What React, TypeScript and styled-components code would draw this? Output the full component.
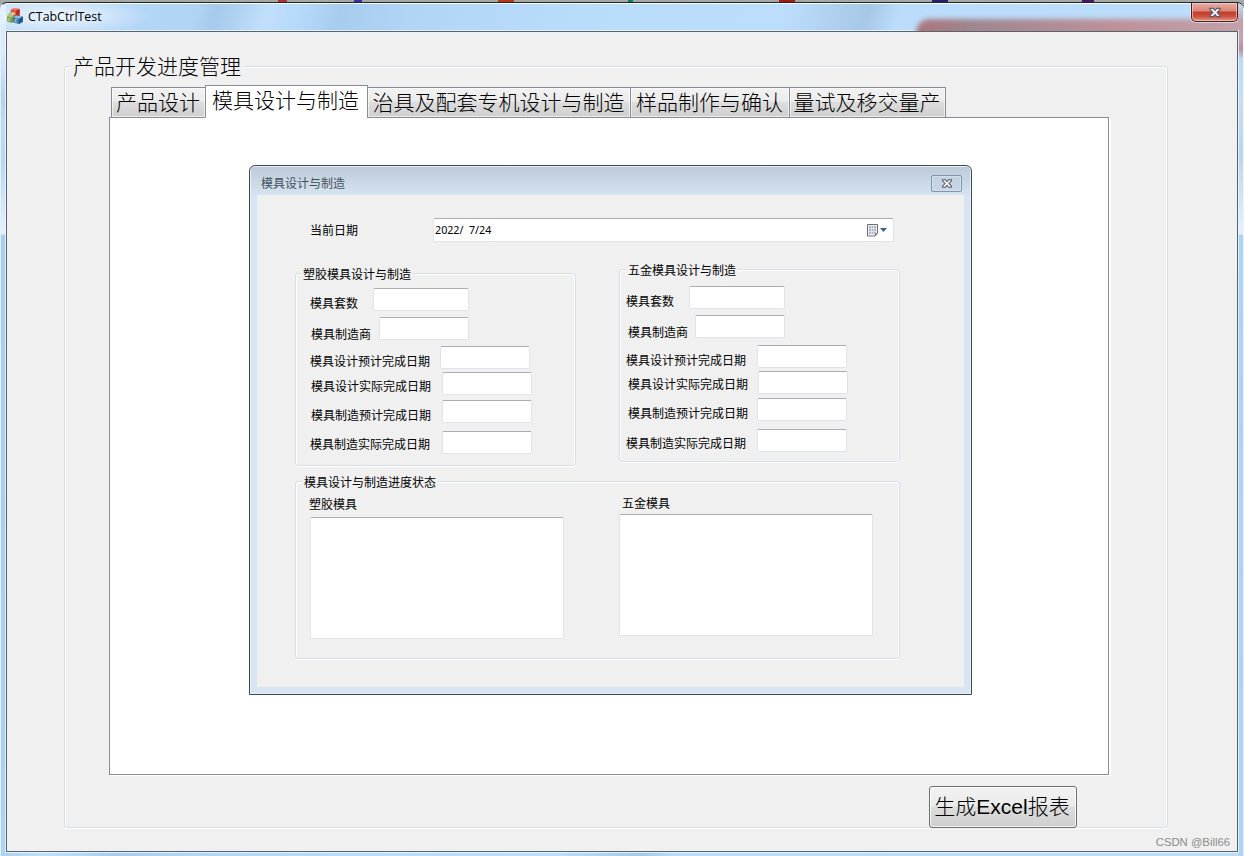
import React from "react";
import styled, { createGlobalStyle, css } from "styled-components";

const GlobalStyle = createGlobalStyle`
  * { box-sizing: border-box; }
  html, body { margin: 0; padding: 0; overflow: hidden; }
  body { font: 12px/14px "Noto Sans CJK SC", sans-serif; color: #000; }
`;

const Desktop = styled.div`
  width: 1244px;
  height: 856px;
  padding-top: 2px;
  background: linear-gradient(90deg, transparent 278px, #a33 278px 287px, transparent 287px 354px, #339 354px 362px, transparent 362px 498px, #b53817 498px 514px, transparent 514px 628px, #087a68 628px 633px, transparent 633px 779px, #a11d14 779px 795px, transparent 795px 932px, #24246a 932px 948px, transparent 948px 1082px, #4b1763 1082px 1094px, transparent 1094px), #a5a8a5;
`;

const Window = styled.div`
  display: flex;
  flex-direction: column;
  height: 854px;
  padding: 0 6px 4px 0;
  border-top: 1px solid #1c2630;
  border-left: 1px solid #e4f1fc;
  border-radius: 7px 7px 0 0;
  background:
    linear-gradient(#fff, #fff) 0 0 / 100% 1px no-repeat,
    linear-gradient(#eef7ff, #dcecfa) 100% 0 / 1px 100% no-repeat,
    radial-gradient(ellipse 90px 20px at 60px 13px, rgba(255, 255, 255, 0.75), transparent) no-repeat,
    linear-gradient(#dcedfc 0, #d8eafb 50px, #b4d2ee 98px, #c0dbf5 120px, #b9d7f2 160px, #e4f1fc 231px, #aacdf0 232px, #aed2f4 100%) 0 0 / 5px 100% no-repeat,
    linear-gradient(#c6def4 0, #c3a0a6 18px, #c4a6b0 34px, #bb9098 46px, #bcdaf6 56px, #c6dff7 100px, #b9d5f0 150px, #e8f2fd 231px, #aed2f6 232px, #b0d4f7 100%) 100% 0 / 6px 100% no-repeat,
    linear-gradient(105deg, #c3def6 0, #b5d7f8 100px, #b2d4f4 190px, #a6caec 210px, #c0dffa 260px, #b7dafb 290px, #a8ccee 330px, #b2d5f6 400px, #badcfb 560px, #bcdefc 760px, #a6c8e6 840px, #bbddfb 870px, #bddcf8 100%) no-repeat;
`;

const TitleBar = styled.div`
  display: flex;
  align-items: flex-start;
  height: 28px;
  flex: none;
  position: relative;
  padding: 5px 0 0 6px;
  overflow: hidden;
`;

const TitleGlow = styled.div`
  position: absolute;
  left: 915px;
  top: 16px;
  width: 340px;
  height: 34px;
  border-radius: 14px 0 0 0;
  background: linear-gradient(90deg, #ab767b, #a0868f 60px, #bd9299 200px, #c4a2aa);
  filter: blur(2.5px);
`;

const TitleText = styled.span`
  margin: 1px 0 0 5px;
  font: 12.4px/16px "Open Sans", sans-serif;
  flex: 1;
`;

const CloseButton = styled.button<{ $inner?: boolean }>`
  display: flex;
  align-items: center;
  justify-content: center;
  padding: 0;
  flex: none;
  position: relative;
  ${(p) =>
    p.$inner
      ? css`
          width: 31px;
          height: 17px;
          margin: 9px 2px 0 0;
          border: 1px solid #8494b0;
          border-radius: 2px;
          background: linear-gradient(#c3d0de, #c9d7e6);
          box-shadow: inset 0 0 0 1px #d3dfeb;
        `
      : css`
          width: 47px;
          height: 19px;
          margin: -5px 0 0;
          border: 1px solid #3e2226;
          border-top: 0;
          border-radius: 0 0 5px 5px;
          background: linear-gradient(#e9aea3, #d98576 45%, #c3392a 50%, #cd5340 75%, #e29a86);
          box-shadow: inset 0 0 0 1px rgba(255, 215, 205, 0.6), 0 0 0 1px rgba(255, 255, 255, 0.5);
        `}
`;

const Client = styled.div`
  display: flex;
  flex-direction: column;
  flex: 1;
  margin-left: 5px;
  border: 1px solid #56646f;
  outline: 1px solid rgba(236, 246, 255, 0.85);
  background: #f0f0f0;
`;

const GroupBox = styled.section<{ $w: number; $h: number; $x?: number; $y?: number }>`
  display: flex;
  flex-direction: column;
  flex: none;
  width: ${(p) => p.$w}px;
  height: ${(p) => p.$h}px;
  margin: ${(p) => p.$y ?? 0}px 0 0 ${(p) => p.$x ?? 0}px;
  border: 1px solid #d5dfe5;
  border-radius: 3px;
  box-shadow: inset 1px 1px 0 #fff, inset -1px 0 0 #fff, 0 1px 0 #fff;
`;

const Legend = styled.h2<{ $large?: boolean; $x?: number }>`
  align-self: flex-start;
  flex: none;
  height: ${(p) => (p.$large ? 28 : 16)}px;
  margin: ${(p) => (p.$large ? -16 : -8)}px 0 0 ${(p) => p.$x ?? 5}px;
  padding: 0 2px;
  background: #f0f0f0;
  font-weight: ${(p) => (p.$large ? 300 : 400)};
  font-size: ${(p) => (p.$large ? 21 : 12)}px;
  line-height: ${(p) => (p.$large ? 28 : 16)}px;
  white-space: nowrap;
`;

const TabStrip = styled.nav`
  display: flex;
  align-items: flex-end;
  height: 33px;
  margin: 6px 0 -1px 46px;
  position: relative;
`;

const Tab = styled.button<{ $w: number; $active?: boolean }>`
  flex: none;
  width: ${(p) => p.$w}px;
  height: ${(p) => (p.$active ? 33 : 31)}px;
  padding: ${(p) => (p.$active ? "0 2px 2px 0" : "0 1px 0 0")};
  border: 1px solid #898c95;
  border-bottom-color: ${(p) => (p.$active ? "#fff" : "#898c95")};
  margin-right: -1px;
  background: ${(p) => (p.$active ? "#fff" : "linear-gradient(#f2f2f2, #ebebeb 45%, #dddddd 50%, #cfcfcf)")};
  box-shadow: ${(p) => (p.$active ? "none" : "inset 0 0 0 1px rgba(255,255,255,.6)")};
  font: 300 21px/28px "Liberation Sans", "Noto Sans CJK SC", sans-serif;
  color: #000;
  white-space: nowrap;
  display: flex;
  align-items: center;
  justify-content: center;
`;

const TabPanel = styled.main`
  width: 1000px;
  height: 658px;
  flex: none;
  margin-left: 44px;
  padding: 47px 0 0 139px;
  border: 1px solid #898c95;
  background: #fff;
  box-shadow: 1px 1px 0 #fff, 2px 1px 0 #fff;
`;

const Dialog = styled.div`
  display: flex;
  flex-direction: column;
  width: 723px;
  height: 530px;
  padding: 0 7px 7px;
  border: 1px solid #44484f;
  border-radius: 6px 6px 0 0;
  background: linear-gradient(#bccad8, #d7e4f2 30px);
  box-shadow: inset 0 0 0 1px #e6eef6;
`;

const DialogTitle = styled.header`
  display: flex;
  justify-content: space-between;
  height: 29px;
  flex: none;
  padding-left: 4px;
  color: #45505c;
  line-height: 34px;
`;

const DialogBody = styled.div`
  flex: 1;
  padding: 23px 0 0 38px;
  background: #f0f0f0;
`;

const DateRow = styled.div`
  display: flex;
  align-items: center;
  height: 24px;
  padding-left: 15px;
`;

const Field = styled.div<{ $w: number; $h?: number }>`
  width: ${(p) => p.$w}px;
  height: ${(p) => p.$h ?? 23}px;
  flex: none;
  border: 1px solid #e2e3ea;
  border-top-color: #abadb3;
  border-radius: 2px;
  background: #fff;
`;

const DateField = styled(Field)`
  display: flex;
  align-items: center;
  justify-content: space-between;
  margin-left: 75px;
  padding: 0 5px 0 1px;
  font: 10.7px/14px "Noto Sans", sans-serif;
  white-space: pre;
`;

const StatusField = styled(Field)<{ $x: number; $y: number }>`
  margin: ${(p) => p.$y}px 0 0 ${(p) => p.$x}px;
`;

const Columns = styled.div<{ $gap: number }>`
  display: flex;
  align-items: flex-start;
  gap: ${(p) => p.$gap}px;
`;

const FormRow = styled.div<{ $gap: number; $indent: number }>`
  display: flex;
  align-items: flex-start;
  height: 23px;
  flex: none;
  margin-top: ${(p) => p.$gap}px;
  padding-left: ${(p) => p.$indent}px;
`;

const Label = styled.label<{ $w?: number; $drop?: number }>`
  display: block;
  flex: none;
  width: ${(p) => (p.$w ? `${p.$w}px` : "auto")};
  margin-top: ${(p) => p.$drop ?? 0}px;
  line-height: 16px;
  white-space: nowrap;
`;

const StatusColumn = styled.div<{ $lift: number; $indent: number }>`
  display: flex;
  flex-direction: column;
  margin-top: ${(p) => p.$lift}px;
  ${Label} { margin-left: ${(p) => p.$indent}px; }
`;

const Footer = styled.footer`
  display: flex;
  margin: 11px 0 0 864px;
`;

const ReportButton = styled.button`
  width: 148px;
  height: 42px;
  flex: none;
  padding: 0 2px 0 0;
  position: relative;
  border: 1px solid #707070;
  border-radius: 3px;
  background: linear-gradient(#f2f2f2, #ebebeb 48%, #dddddd 50%, #cfcfcf);
  box-shadow: inset 0 0 0 1px rgba(255, 255, 255, 0.75), 0 0 0 1px #f0f0f0;
  font: 300 21px/28px "Liberation Sans", "Noto Sans CJK SC", sans-serif;
  color: #000;
  white-space: nowrap;
`;

const Watermark = styled.div`
  align-self: flex-end;
  margin: 6px 7px 0 0;
  font: 11.3px/16px "Liberation Sans", sans-serif;
  color: #8b8b8b;
`;

const AppLogo = () => (
  <svg width="16" height="16" viewBox="0 0 16 16">
    <path d="M3.8 1.6 L7.6 0 L12.6 .9 V7.8 L9 9.5 L3.6 8.2Z" fill="#dc4a30" />
    <path d="M3.8 1.6 L7.6 0 L12.6 .9 L9.2 2.5Z" fill="#f0876f" />
    <path d="M9.2 2.5 L12.6 .9 V7.8 L9 9.5Z" fill="#b92c1d" />
    <path d="M0.2 8.2 L3 4.6 L7.2 5.8 V13 L5 14.9 L0.2 13.6Z" fill="#789a3a" />
    <path d="M0.2 8.2 L3 4.6 L7.2 5.8 L5 9.4Z" fill="#b3c67e" />
    <path d="M6.3 9.2 L9.7 7.4 L15.8 8.6 V13.8 L12 16 L6.3 14.4Z" fill="#3678b0" />
    <path d="M6.3 9.2 L9.7 7.4 L15.8 8.6 L12 10.7Z" fill="#93c1e3" />
    <path d="M12 10.7 L15.8 8.6 V13.8 L12 16Z" fill="#20578c" />
    <path d="M5.2 6.8V3.8L6.4 5.4 7.7 4.2V7.2M3.5 10.2H1.8V12.8H3.5M10.2 11.5H8.3V13.8H10.2" fill="none" stroke="#fff" strokeOpacity=".75" strokeWidth=".8" />
  </svg>
);

const CloseGlyph = ({ small }: { small?: boolean }) => (
  <svg width={small ? 12 : 12} height={small ? 9 : 11} viewBox="0 0 12 10">
    <path
      d="M1 .8H4.2L6 2.9 7.8.8H11V2L8.2 5 11 8V9.2H7.8L6 7.1 4.2 9.2H1V8L3.8 5 1 2Z"
      fill="#f6f6f8"
      stroke="#555b70"
      strokeWidth="1.2"
    />
  </svg>
);

const CalendarGlyph = () => (
  <svg width="21" height="13" viewBox="0 0 21 13">
    <path d="M.5 .5H10.5V9.5L8 12H.5Z" fill="#eef2f6" stroke="#75696a" />
    <path d="M2 2H9V10H2Z" fill="#aab7c8" />
    <path d="M2 4.5H9M2 7.5H9M4.5 2V10M6.5 2V10" stroke="#e8eef4" strokeWidth=".7" />
    <path d="M8 12V9.5H10.5Z" fill="#75696a" />
    <path d="M13 4H20L16.5 8Z" fill="#3c5a93" />
  </svg>
);

type RowSpec = { text: string; gap: number; indent: number; label: number; drop: number; box: number };

const plasticRows: RowSpec[] = [
  { text: "模具套数", gap: 6, indent: 14, label: 63, drop: 7, box: 96 },
  { text: "模具制造商", gap: 6, indent: 15, label: 68, drop: 9, box: 90 },
  { text: "模具设计预计完成日期", gap: 6, indent: 14, label: 130, drop: 7, box: 90 },
  { text: "模具设计实际完成日期", gap: 3, indent: 15, label: 131, drop: 6, box: 90 },
  { text: "模具制造预计完成日期", gap: 5, indent: 15, label: 131, drop: 7, box: 90 },
  { text: "模具制造实际完成日期", gap: 8, indent: 14, label: 132, drop: 5, box: 90 },
];

const metalRows: RowSpec[] = [
  { text: "模具套数", gap: 8, indent: 6, label: 63, drop: 7, box: 96 },
  { text: "模具制造商", gap: 6, indent: 8, label: 67, drop: 9, box: 90 },
  { text: "模具设计预计完成日期", gap: 7, indent: 6, label: 131, drop: 7, box: 90 },
  { text: "模具设计实际完成日期", gap: 3, indent: 8, label: 130, drop: 5, box: 90 },
  { text: "模具制造预计完成日期", gap: 4, indent: 8, label: 129, drop: 7, box: 90 },
  { text: "模具制造实际完成日期", gap: 8, indent: 6, label: 131, drop: 6, box: 90 },
];

const FormRows = ({ rows }: { rows: RowSpec[] }) => (
  <>
    {rows.map((r) => (
      <FormRow key={r.text} $gap={r.gap} $indent={r.indent}>
        <Label $w={r.label} $drop={r.drop}>{r.text}</Label>
        <Field $w={r.box} />
      </FormRow>
    ))}
  </>
);

const tabs = [
  { text: "产品设计", width: 95 },
  { text: "模具设计与制造", width: 163, active: true },
  { text: "治具及配套专机设计与制造", width: 264 },
  { text: "样品制作与确认", width: 160 },
  { text: "量试及移交量产", width: 157 },
];

export default function App() {
  return (
    <Desktop>
      <GlobalStyle />
      <Window>
        <TitleBar>
          <TitleGlow />
          <AppLogo />
          <TitleText>CTabCtrlTest</TitleText>
          <CloseButton aria-label="关闭"><CloseGlyph /></CloseButton>
        </TitleBar>
        <Client>
          <GroupBox $w={1104} $h={762} $x={57} $y={34}>
            <Legend $large $x={6}>产品开发进度管理</Legend>
            <TabStrip>
              {tabs.map((t) => (
                <Tab key={t.text} $w={t.width} $active={t.active}>{t.text}</Tab>
              ))}
            </TabStrip>
            <TabPanel>
              <Dialog>
                <DialogTitle>
                  模具设计与制造
                  <CloseButton $inner aria-label="关闭"><CloseGlyph small /></CloseButton>
                </DialogTitle>
                <DialogBody>
                  <DateRow>
                    <Label>当前日期</Label>
                    <DateField $w={461} $h={24}>{"2022/  7/24"}<CalendarGlyph /></DateField>
                  </DateRow>
                  <Columns $gap={43}>
                    <GroupBox $w={281} $h={193} $y={31}>
                      <Legend>塑胶模具设计与制造</Legend>
                      <FormRows rows={plasticRows} />
                    </GroupBox>
                    <GroupBox $w={281} $h={193} $y={27}>
                      <Legend $x={6}>五金模具设计与制造</Legend>
                      <FormRows rows={metalRows} />
                    </GroupBox>
                  </Columns>
                  <GroupBox $w={605} $h={178} $y={15}>
                    <Legend $x={6}>模具设计与制造进度状态</Legend>
                    <Columns $gap={55}>
                      <StatusColumn $lift={6} $indent={13}>
                        <Label>塑胶模具</Label>
                        <StatusField $w={254} $h={122} $x={14} $y={5} />
                      </StatusColumn>
                      <StatusColumn $lift={5} $indent={3}>
                        <Label>五金模具</Label>
                        <StatusField $w={254} $h={122} $x={0} $y={3} />
                      </StatusColumn>
                    </Columns>
                  </GroupBox>
                </DialogBody>
              </Dialog>
            </TabPanel>
            <Footer>
              <ReportButton>生成Excel报表</ReportButton>
            </Footer>
          </GroupBox>
          <Watermark>CSDN @Bill66</Watermark>
        </Client>
      </Window>
    </Desktop>
  );
}
